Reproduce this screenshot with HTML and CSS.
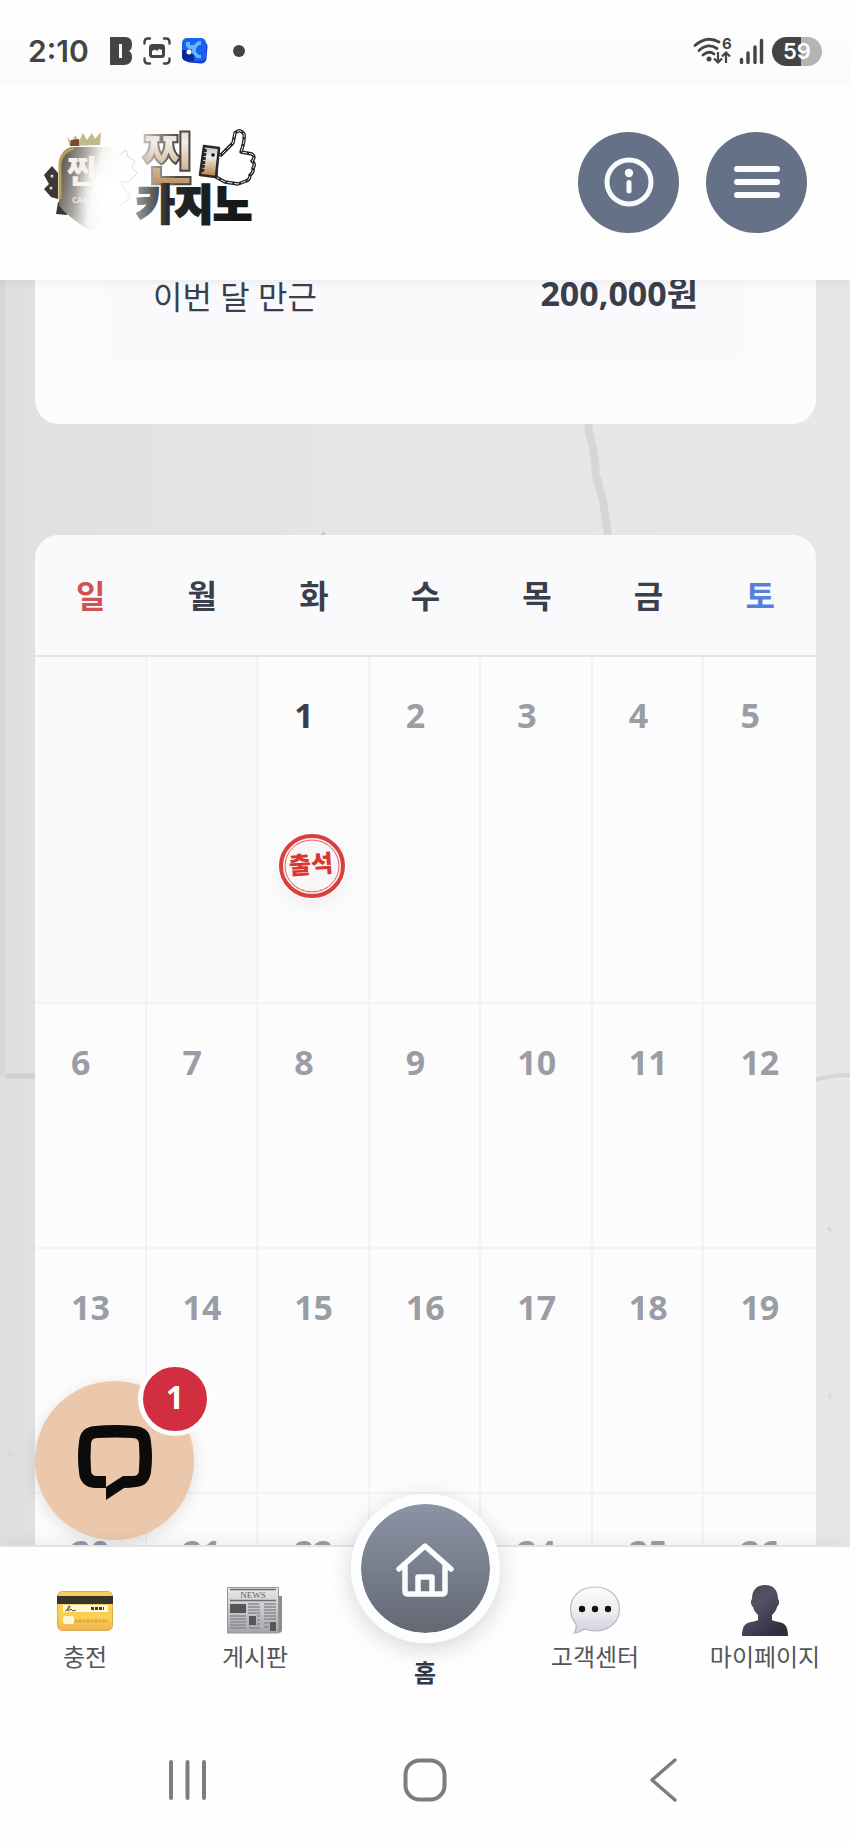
FILE: index.html
```html
<!DOCTYPE html>
<html lang="ko">
<head>
<meta charset="utf-8">
<meta name="viewport" content="width=device-width, initial-scale=1">
<title>찐카지노</title>
<link rel="stylesheet" href="styles.css">
</head>
<body>
<div class="status-bar">
  <div class="status-group">
    <span class="clock">2:10</span>
    <svg class="status-b" width="22" height="28" viewBox="0 0 22 28"><path fill="#444" fill-rule="evenodd" d="M0 0h15c5 0 7 3 7 7 0 4-1 6-3 7 2 1 3 3 3 6 0 5-3 8-8 8H0zM9 7v14h3V7z"/></svg>
    <svg class="status-shot" width="28" height="28" viewBox="0 0 28 28"><path fill="none" stroke="#444" stroke-width="2.4" stroke-linecap="round" d="M1.5 6.500V5q0-3.500 3.500-3.500h2M21 1.500h2q3.500 0 3.500 3.500v1.500M26.500 21.500V23q0 3.500-3.500 3.500h-2M7 26.500H5Q1.500 26.500 1.500 23v-1.500"/><rect x="6" y="7" width="16" height="14" rx="3.500" fill="#444"/><path fill="#fcfcfd" d="M9 18v-4l3-1.500 2 1.500 2-2 3 1v5z"/></svg>
    <svg class="status-app" width="26" height="26" viewBox="0 0 26 26"><rect x="3" y="3" width="22" height="22" rx="5" fill="#2338d8" transform="rotate(5 14 14)"/><rect width="24" height="23" rx="5" fill="#1762f3"/><path fill="#0e2696" d="M0 12h7l5 5v6H5q-5 0-5-5z"/><path fill="#69b5ff" d="M4 4h4v3h4l4-4h3v4h-2l-3 3v4l3 3h2v3h-4l-5-5v-4H7L4 8z"/><circle cx="7" cy="14" r="2.500" fill="#fff"/></svg>
    <span class="status-dot"></span>
  </div>
  <div class="status-group status-right">
    <svg width="38" height="28" viewBox="0 0 38 28"><g fill="none" stroke="#444" stroke-width="2.800" stroke-linecap="round"><path d="M2 8.500Q14-2 26 5M6 13.500q9-8 18-2M10 18q6-5 11-1"/></g><circle cx="16" cy="22" r="2.500" fill="#444"/><path d="M25 15v10m-4-3.500 4 4 4-4M33 26V16m-4 3.500 4-4 4 4" fill="none" stroke="#444" stroke-width="2.200"/><text x="29" y="12" class="wifi-gen">6</text></svg>
    <svg class="signal" width="25" height="28" viewBox="0 0 25 28"><path d="M2.500 22.500v3M9 16v9.500M16 10v15.500M22.500 3.500v22" stroke="#444" stroke-width="3.400" stroke-linecap="round"/></svg>
    <span class="battery">59</span>
  </div>
</div>

<header class="header">
  <a class="logo" href="#" aria-label="찐카지노">
    <svg width="214" height="106" viewBox="0 0 214 106">
      <defs>
        <linearGradient id="shield" x1="0" y1="0" x2="1" y2="0.300"><stop offset="0" stop-color="#4a463f"/><stop offset=".4" stop-color="#a5a29c"/><stop offset=".68" stop-color="#f4f3f1"/><stop offset="1" stop-color="#fff"/></linearGradient>
        <linearGradient id="gold" x1="0" y1="0" x2="0" y2="1"><stop offset="0" stop-color="#c3c0bf"/><stop offset=".35" stop-color="#f3ede8"/><stop offset="1" stop-color="#b07c3c"/></linearGradient>
        <linearGradient id="ink" x1="0" y1="0" x2="1" y2="0"><stop offset="0" stop-color="#999"/><stop offset=".28" stop-color="#25282a"/><stop offset="1" stop-color="#101414"/></linearGradient>
        <linearGradient id="edge" x1="0" y1="0" x2="1" y2="0"><stop offset="0" stop-color="#c8c6c4"/><stop offset=".7" stop-color="#4a4745"/></linearGradient>
        <radialGradient id="glow"><stop offset=".2" stop-color="#fff"/><stop offset="1" stop-color="#fff" stop-opacity="0"/></radialGradient>
      </defs>
      <path d="M0 46l8-9 6 7v26l-7-2L0 60l5-5zM14 73l12 5-3 8-11-1z" fill="#393836"/>
      <circle cx="8" cy="47" r="1.500" fill="#ddd"/><circle cx="7" cy="59" r="1.500" fill="#ddd"/>
      <path d="M15 33q2-12 12-15h38q10 4 10 12v43q-4 13-29 29Q19 84 15 76z" fill="url(#shield)"/>
      <path d="M16 70V34q2-12 14-15" fill="none" stroke="#baa053" stroke-width="3"/>
      <path d="M26 17L23 8l5 5 3-7 4 6 4-8 4 7 5-7 3 6 6-7-1 13z" fill="#c2b888"/>
      <path d="M26 17l1-6 8-1v7z" fill="#7a4938"/>
      <path d="M75 26l7-5 2 7 7 4-3 6 5 6-9 10-7-2 3 8 6 5-3 7-8 5" fill="none" stroke="#dddbdb" stroke-width="1"/>
      <text x="23" y="54" class="logo-shield">찐</text>
      <text x="28" y="74" class="logo-small">CASINO</text>
      <ellipse cx="62" cy="64" rx="31" ry="42" fill="url(#glow)"/>
      <text x="98" y="50" class="logo-top">찐</text>
      <text x="92" y="91" class="logo-bottom">카지노</text>
      <path d="M172 24l5 2 12-12 2-10q5-5 9 1 1 6-3 18l11 2q4 3 0 7 4 3 1 7 1 4-3 7 0 5-4 6l-8 3-13-2-9-5z" fill="#fff" stroke="#222" stroke-width="3.400" stroke-linejoin="round"/>
      <path d="M172 24l5 2 12-12 2-10q5-5 9 1 1 6-3 18l11 2q4 3 0 7 4 3 1 7 1 4-3 7 0 5-4 6l-8 3-13-2-9-5" fill="none" stroke="#eee" stroke-width="1" stroke-dasharray="5 2"/>
      <path d="M160 17l15 2-3 29-16-2z" fill="url(#gold)" stroke="#292929" stroke-width="2.500" stroke-linejoin="round"/>
      <path d="M161 20l-3 23" stroke="#292929" stroke-width="4" stroke-dasharray="3 1"/>
      <circle cx="169" cy="26" r="1.800" fill="#111"/>
    </svg>
  </a>
  <div class="header-actions">
    <button class="round-button" type="button" aria-label="안내">
      <svg width="50" height="50" viewBox="0 0 50 50"><circle cx="25" cy="25" r="22" fill="none" stroke="#f8fcff" stroke-width="5"/><circle cx="25" cy="16" r="4.200" fill="#f8fcff"/><path d="M25 25.500v8.500" stroke="#f8fcff" stroke-width="5" stroke-linecap="round"/></svg>
    </button>
    <button class="round-button" type="button" aria-label="메뉴">
      <svg width="46" height="34" viewBox="0 0 46 34"><path d="M3 4h40M3 17h40M3 30h40" stroke="#f8fcff" stroke-width="6" stroke-linecap="round"/></svg>
    </button>
  </div>
</header>

<main class="content">
  <svg class="marble" viewBox="0 0 850 1265" preserveAspectRatio="none" aria-hidden="true">
    <path d="M587 120q0 25 4 40t5 35l7 26 6 42" fill="none" stroke="#d6d5d7" stroke-width="8"/>
    <path d="M320 256l4-6 2 6z" fill="#cdccce"/>
    <path d="M0 0h5v795H0z" fill="#d6d6d6"/>
    <path d="M5 796h30" fill="none" stroke="#d0d0d0" stroke-width="5"/>
    <path d="M815 800q16-5 35-5" fill="none" stroke="#d6d5d7" stroke-width="4"/>
    <path d="M826 950l4-5 2 7zM828 1118l2-7 2 9zM7 1176l3-7 2 7z" fill="#d9d8da"/>
  </svg>
  <section class="card reward-card">
    <dl class="reward-row">
      <dt>이번 달 만근</dt>
      <dd>200,000원</dd>
    </dl>
  </section>

  <section class="card calendar-card">
    <table class="calendar">
      <thead>
        <tr><th class="sunday">일</th><th>월</th><th>화</th><th>수</th><th>목</th><th>금</th><th class="saturday">토</th></tr>
      </thead>
      <tbody>
        <tr>
          <td class="empty"></td><td class="empty"></td>
          <td class="today">1
            <svg class="stamp" width="68" height="66" viewBox="0 0 68 66" role="img" aria-label="출석">
              <ellipse cx="34" cy="33" rx="31" ry="30" fill="#f8f6f7" stroke="#d93f3c" stroke-width="4"/>
              <ellipse cx="34" cy="33" rx="27" ry="26" fill="none" stroke="#d9615e" stroke-width="1"/>
              <path d="M14 51q17 13 38 2" fill="none" stroke="#d9615e" stroke-width="1" stroke-dasharray="1 5"/>
              <text x="33" y="40" class="stamp-text" transform="rotate(-4 34 33)">출석</text>
            </svg>
          </td>
          <td>2</td><td>3</td><td>4</td><td>5</td>
        </tr>
        <tr><td>6</td><td>7</td><td>8</td><td>9</td><td>10</td><td>11</td><td>12</td></tr>
        <tr><td>13</td><td>14</td><td>15</td><td>16</td><td>17</td><td>18</td><td>19</td></tr>
        <tr><td>20</td><td>21</td><td>22</td><td>23</td><td>24</td><td>25</td><td>26</td></tr>
      </tbody>
    </table>
  </section>

  <button class="chat-button" type="button" aria-label="채팅 상담">
    <svg width="76" height="76" viewBox="0 0 76 76"><path fill="#0b0b0b" fill-rule="evenodd" d="M18 1q20-2 40 0 15 1 16 16 2 15 0 30-2 14-15 15-6 1-12 1L29 75V63H18Q3 62 2 47 0 32 2 17 3 2 18 1zM20 13q-6 0-6 6-1 13 0 26 0 6 6 6h9v11l17-11h10q6 0 6-6 1-13 0-26 0-6-6-6-18-1-36 0z"/></svg>
    <span class="chat-badge">1</span>
  </button>
</main>

<nav class="tab-bar">
  <a class="tab" href="#">
    <svg width="56" height="52" viewBox="0 0 56 52">
      <defs><linearGradient id="card" x1="0" y1="0" x2="0" y2="1"><stop offset="0" stop-color="#f7cf5a"/><stop offset=".7" stop-color="#fbce50"/><stop offset="1" stop-color="#efb056"/></linearGradient></defs>
      <rect x=".5" y="6.500" width="55" height="39" rx="5" fill="url(#card)" stroke="#dba950"/>
      <path d="M0 11h56v8H0z" fill="#35352c"/><path d="M6 20h45v7H6z" fill="#fff8dd"/>
      <path d="M8 26q5-2 5-5-3 0-2 5l3-2 2 2 3-1" fill="none" stroke="#554d38" stroke-width="1"/><path d="M34 23.500h13" stroke="#443d2e" stroke-width="3" stroke-dasharray="3 1"/>
      <rect x="6" y="31" width="11" height="8" rx="2" fill="#fff6d8"/><path d="M18 36h33" stroke="#dca93f" stroke-width="3" stroke-dasharray="2 1 4 1"/>
    </svg>
    <span>충전</span>
  </a>
  <a class="tab" href="#">
    <svg width="56" height="52" viewBox="0 0 56 52">
      <defs><linearGradient id="paper" x1="0" y1="0" x2="0" y2="1"><stop offset="0" stop-color="#e9e9ea"/><stop offset="1" stop-color="#a6a5a9"/></linearGradient></defs>
      <path d="M48 11h7v34q0 3-4 3h-6z" fill="#8c8b8f"/><path d="M.5 2.500h51V48H.5z" fill="url(#paper)" stroke="#98979b"/>
      <path d="M3 4.500h46M3 15.500h46" stroke="#6e6d71" stroke-width="1.500"/>
      <text x="26" y="13" class="news-title">NEWS</text>
      <path d="M3 19h16v9H3zM22 31h7v9h-7zM43 37h6v9h-6z" fill="#57565a"/>
      <path d="M21 19h11M21 22h12M21 25h12M21 28h12M37 19h12M37 22h12M37 25h12M37 28h12M3 31h16M3 34h16M3 37h16M3 40h16M3 43h16M30 31h3M30 35h3M30 39h3M22 43h11M37 31h12M37 34h12M37 38h5M37 42h5" stroke="#8b8a8e" stroke-width="1.300"/>
    </svg>
    <span>게시판</span>
  </a>
  <a class="tab tab-home" href="#">
    <span class="home-circle">
      <svg width="60" height="56" viewBox="0 0 60 56"><path d="M4 28L30 5l26 23M10 23v27q0 3 3 3h34q3 0 3-3V23M23 52V36h14v16" fill="none" stroke="#fbfdff" stroke-width="5.500" stroke-linecap="round" stroke-linejoin="round"/></svg>
    </span>
    <span>홈</span>
  </a>
  <a class="tab" href="#">
    <svg width="56" height="52" viewBox="0 0 56 52">
      <defs><linearGradient id="bubble" x1="0" y1="0" x2="0" y2="1"><stop offset="0" stop-color="#fbfafb"/><stop offset=".5" stop-color="#efeef1"/><stop offset="1" stop-color="#d4cde0"/></linearGradient></defs>
      <path d="M28 2c14 0 24.500 9 24.500 22S42 46 28 46q-6 0-11-2-5 4-10 4 3-4 2-9-5.500-6-5.500-15C3.500 11 14 2 28 2z" fill="url(#bubble)" stroke="#b9b6bd" stroke-width="1.200"/>
      <circle cx="15" cy="24" r="3.200" fill="#111"/><circle cx="28" cy="24" r="3.200" fill="#111"/><circle cx="41" cy="24" r="3.200" fill="#111"/>
    </svg>
    <span>고객센터</span>
  </a>
  <a class="tab" href="#">
    <svg width="56" height="52" viewBox="0 0 56 52">
      <defs><linearGradient id="person" x1="0" y1="0" x2=".7" y2="1"><stop offset="0" stop-color="#464151"/><stop offset=".4" stop-color="#555064"/><stop offset="1" stop-color="#312c40"/></linearGradient></defs>
      <path d="M28 0c9 0 13 6 13 14 2 2 1 6-1 8-1 4-3 6-5 8v5c2 2 8 1 12 4 3 2 4 7 4 12H5c0-5 1-10 4-12 4-3 10-2 12-4v-5c-2-2-4-4-5-8-2-2-3-6-1-8C15 6 19 0 28 0z" fill="url(#person)"/>
    </svg>
    <span>마이페이지</span>
  </a>
</nav>

<div class="system-nav">
  <button type="button" aria-label="최근 앱"><svg width="44" height="44" viewBox="0 0 44 44"><path d="M6 4v36M22.500 4v36M39 4v36" stroke="#7e7c7f" stroke-width="4" stroke-linecap="round"/></svg></button>
  <button type="button" aria-label="홈 화면"><svg width="44" height="44" viewBox="0 0 44 44"><rect x="2.500" y="2.500" width="39" height="39" rx="14" fill="none" stroke="#7e7c7f" stroke-width="4"/></svg></button>
  <button type="button" aria-label="뒤로"><svg width="44" height="44" viewBox="0 0 44 44"><path d="M34 2L11 22l23 20" fill="none" stroke="#7e7c7f" stroke-width="3.500" stroke-linecap="round" stroke-linejoin="round"/></svg></button>
</div>
</body>
</html>
```

FILE: styles.css
```css
* {
  box-sizing: border-box;
}

body {
  margin: 0;
  height: 100vh;
  display: flex;
  flex-direction: column;
  overflow: hidden;
  background: #fefefe;
  color: #3b3e4b;
  font-family: "Open Sans", "Noto Sans CJK KR", sans-serif;
}

button {
  margin: 0;
  padding: 0;
  border: 0;
  background: none;
  font: inherit;
}

a {
  color: inherit;
  text-decoration: none;
}

svg {
  display: block;
  overflow: visible;
}

/* Status bar */
.status-bar {
  display: flex;
  align-items: center;
  justify-content: space-between;
  height: 84px;
  padding: 18px 28px 0;
  background: linear-gradient(#fefefe, #fbfbfd);
}

.status-group {
  display: flex;
  align-items: center;
  gap: 11px;
}

.status-right {
  gap: 8px;
}

.clock {
  margin-right: 10px;
  color: #444;
  font: 600 30px/36px Inter, sans-serif;
}

.status-dot {
  width: 12px;
  height: 12px;
  margin-left: 14px;
  border-radius: 50%;
  background: #444;
}

.wifi-gen {
  fill: #444;
  font: 700 15px Inter, sans-serif;
}

.battery {
  width: 50px;
  border-radius: 15px;
  background: linear-gradient(90deg, #444 58%, #b4b4b5 58%);
  color: #fff;
  font: 600 22px/29px Inter, sans-serif;
  text-align: center;
}

/* Header */
.header {
  position: relative;
  z-index: 2;
  display: flex;
  align-items: center;
  justify-content: space-between;
  height: 196px;
  padding: 0 43px 0 44px;
  background: #fefefe;
  box-shadow: 0 4px 8px rgba(0, 0, 0, 0.05);
}

.logo-shield {
  fill: #f5f1ea;
  font: 900 32px "Noto Sans CJK KR", sans-serif;
}

.logo-small {
  fill: #e8e6e2;
  font: 700 8px "Open Sans", sans-serif;
}

.logo-top {
  fill: url(#gold);
  stroke: url(#edge);
  stroke-width: 2;
  font: 900 56px "Noto Sans CJK KR", sans-serif;
}

.logo-bottom {
  fill: url(#ink);
  stroke: url(#ink);
  stroke-width: 2;
  font: 900 42px "Noto Sans CJK KR", sans-serif;
}

.header-actions {
  display: flex;
  gap: 27px;
}

.round-button {
  display: grid;
  place-items: center;
  width: 101px;
  height: 101px;
  border-radius: 50%;
  background: #657186;
}

/* Content */
.content {
  position: relative;
  flex: 1;
  min-height: 0;
  overflow: hidden;
  padding: 0 34px 0 35px;
  background: linear-gradient(90deg, #dedede, #e1e1e1 4%, #e6e5e7 45%, #e7e6e9);
}

.marble {
  position: absolute;
  top: 0;
  left: 0;
  width: 100%;
  height: 100%;
}

.card {
  position: relative;
  overflow: hidden;
  border-radius: 24px;
  background: #fcfcfd;
}

.reward-card {
  margin-top: -48px;
  padding: 24px 70px 64px;
}

.reward-row {
  display: flex;
  justify-content: space-between;
  margin: 0;
  padding: 14px 48px 38px;
  border-radius: 12px;
  background: #fafafd;
}

.reward-row dt {
  padding-top: 2px;
  font-size: 32px;
  line-height: 50px;
}

.reward-row dd {
  margin: 0;
  font-size: 34px;
  font-weight: 700;
  line-height: 46px;
}

.calendar-card {
  margin-top: 111px;
}

.calendar {
  width: 100%;
  border-collapse: separate;
  border-spacing: 0;
  table-layout: fixed;
}

.calendar th {
  height: 122px;
  padding: 0 0 2px;
  border-bottom: 2px solid #e6e6ea;
  background: #fafafd;
  font-size: 32px;
  font-weight: 700;
}

.calendar .sunday {
  color: #d15252;
}

.calendar .saturday {
  color: #5680dc;
}

.calendar td {
  height: 245px;
  padding: 34px 0 0 36px;
  border-right: 2px solid #f3f3f6;
  border-bottom: 2px solid #f3f3f6;
  color: #9b9da5;
  font-size: 34px;
  font-weight: 700;
  line-height: 48px;
  vertical-align: top;
}

.calendar td:last-child {
  border-right: 0;
}

.calendar .empty {
  background: #faf9fc;
}

.calendar tbody tr:first-child td {
  height: 347px;
}

.calendar .today {
  color: #3b3b4b;
}

.stamp {
  margin: 94px 0 0 -16px;
  border-radius: 50%;
  box-shadow: 0 8px 20px rgba(0, 0, 0, 0.05);
}

.stamp-text {
  fill: #d93630;
  font: 900 24px "Noto Sans CJK KR", sans-serif;
  text-anchor: middle;
}

.chat-button {
  position: absolute;
  bottom: 5px;
  left: 35px;
  display: grid;
  place-items: center;
  width: 159px;
  height: 159px;
  padding-top: 4px;
  border-radius: 50%;
  background: #ebc7ab;
  box-shadow: 0 4px 16px rgba(0, 0, 0, 0.12);
}

.chat-badge {
  position: absolute;
  top: -19px;
  right: -18px;
  width: 74px;
  height: 74px;
  border: 5px solid #fdfdfe;
  border-radius: 50%;
  background: #d12f3f;
  color: #fff;
  font: 700 32px/60px "Noto Sans", sans-serif;
}

/* Tab bar */
.tab-bar {
  position: relative;
  z-index: 2;
  display: grid;
  grid-template-columns: repeat(5, 1fr);
  height: 175px;
  border-top: 2px solid #e3e3e6;
  background: #fefefe;
  box-shadow: 0 -12px 16px -8px rgba(0, 0, 0, 0.06);
}

.tab {
  display: flex;
  flex-direction: column;
  align-items: center;
  padding-top: 38px;
  color: #55565a;
  font-size: 24px;
  line-height: 34px;
  white-space: nowrap;
}

.tab span {
  margin-top: 3px;
}

.news-title {
  fill: #66656a;
  font: 400 9px "Liberation Serif", serif;
  text-anchor: middle;
}

.tab-home {
  padding-top: 0;
  color: #32384a;
  font-weight: 700;
}

.tab-home .home-circle {
  display: grid;
  place-items: center;
  width: 149px;
  height: 149px;
  margin-top: -53px;
  margin-bottom: 10px;
  border: 10px solid #fcfdfe;
  border-radius: 50%;
  background: linear-gradient(#8b94a5, #646873) padding-box;
  box-shadow: 0 6px 24px rgba(0, 0, 0, 0.16);
}

/* System navigation */
.system-nav {
  display: grid;
  grid-template-columns: repeat(3, 1fr);
  justify-items: center;
  height: 122px;
  padding: 38px 68px 0;
}

.system-nav button {
  height: 44px;
}
```
